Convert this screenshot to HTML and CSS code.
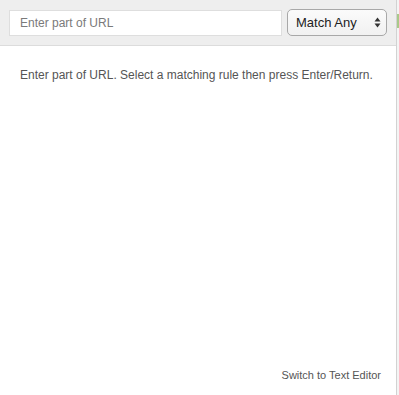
FILE: index.html
```html
<!DOCTYPE html>
<html>
<head>
<meta charset="utf-8">
<link rel="stylesheet" href="styles.css">
</head>
<body>
<div class="page">
  <div class="popup">
    <div class="header">
      <input class="url-input" type="text" placeholder="Enter part of URL">
      <div class="select">
        <span class="select-label">Match Any</span>
        <svg class="select-arrows" width="7" height="11" viewBox="0 0 7 11"><path d="M3.5 0.5 L6.5 4.5 L0.5 4.5 Z M3.5 10.5 L6.5 6.5 L0.5 6.5 Z" fill="#333"/></svg>
      </div>
    </div>
    <div class="content">
      <p class="hint">Enter part of URL. Select a matching rule then press Enter/Return.</p>
    </div>
    <div class="footer">
      <span class="switch-link">Switch to Text Editor</span>
    </div>
  </div>
  <div class="edge"><div class="edge-mark"></div></div>
</div>
</body>
</html>
```
FILE: styles.css
```css
html, body {
  margin: 0;
  padding: 0;
  background: #ffffff;
}
body {
  font-family: "Liberation Sans", Arial, Helvetica, sans-serif;
}
.page {
  display: flex;
  width: 399px;
  height: 395px;
  overflow: hidden;
}
.popup {
  width: 396px;
  height: 395px;
  display: flex;
  flex-direction: column;
  border-right: 1px solid #d2d2d2;
  background: #ffffff;
}
.edge {
  flex: 1;
  background: #f4f4f4;
  position: relative;
}
.edge-mark {
  position: absolute;
  top: 14px;
  left: 0;
  width: 2px;
  height: 14px;
  background: #a9c98a;
}
.header {
  background: #eeeeee;
  border-bottom: 1px solid #dcdcdc;
  display: flex;
  align-items: flex-start;
  padding: 9px 0 0 9px;
  box-sizing: border-box;
  height: 46px;
  gap: 5px;
}
.url-input {
  box-sizing: border-box;
  width: 273px;
  height: 26px;
  margin-top: 1px;
  border: 1px solid #dedede;
  background: #ffffff;
  padding: 0 10px;
  font-family: "Liberation Sans", Arial, sans-serif;
  font-size: 12px;
  color: #333;
  outline: none;
}
.url-input::placeholder {
  color: #7a7a7a;
}
.select {
  box-sizing: border-box;
  width: 100px;
  height: 27px;
  border: 1px solid #a8a8a8;
  border-radius: 5px;
  background: linear-gradient(#fbfbfb, #f1f1f1);
  display: flex;
  align-items: center;
  justify-content: space-between;
  padding: 0 5px 0 8px;
}
.select-label {
  font-size: 13px;
  color: #222;
}
.select-arrows {
  display: block;
}
.content {
  flex: 1;
  padding: 0 20px;
}
.hint {
  margin: 22px 0 0 0;
  font-size: 12px;
  color: #555555;
  line-height: 14px;
}
.footer {
  display: flex;
  justify-content: flex-end;
  padding: 0 15px 13px 0;
}
.switch-link {
  font-size: 11px;
  color: #555555;
  line-height: 13px;
}
```
